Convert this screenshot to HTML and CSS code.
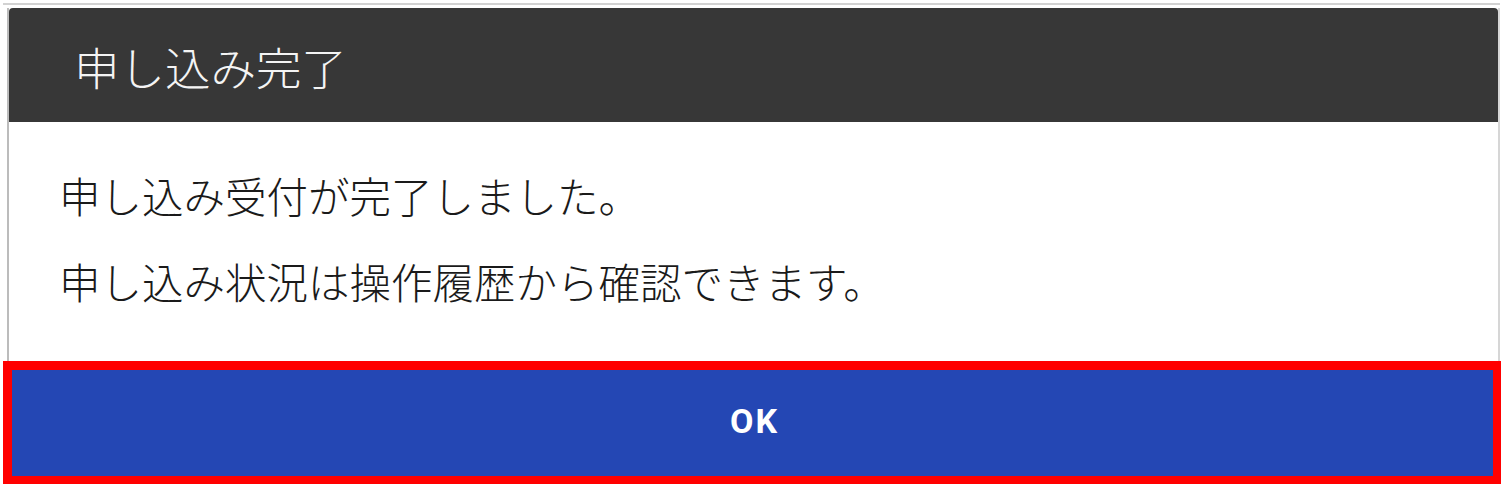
FILE: index.html
```html
<!DOCTYPE html>
<html lang="ja">

<head>
	<meta charset="UTF-8">
	<meta name="viewport" content="width=device-width, initial-scale=1.0">
	<title>申し込み完了</title>
	<link rel="stylesheet" href="styles.css">
</head>

<body>
	<div class="dialog">
		<div class="panel">
			<div class="header">
				<h1 class="title">申し込み完了</h1>
			</div>
			<div class="content">
				<p>申し込み受付が完了しました。</p>
				<p>申し込み状況は操作履歴から確認できます。</p>
			</div>
		</div>
	</div>
	<div class="action">
		<button class="ok" type="button">OK</button>
	</div>
</body>

</html>
```

FILE: styles.css
```css
* {
	padding: 0;
	margin: 0;
	border: 0;
	box-sizing: border-box;
}

body {
	background: #fff;
	font-family: "Noto Sans CJK JP", "Noto Sans", sans-serif;
	width: 1503px;
	height: 490px;
	overflow: hidden;
}

.dialog {
	margin: 3px 3px 0 3px;
	border-top: 2px solid #d2d2d2;
	padding-top: 3px;
}

.panel {
	margin-left: 4px;
	border-left: 2px solid #bcbcbc;
	border-right: 2px solid #d6d6d6;
}

.header {
	height: 114px;
	background: #373737;
	border-radius: 4px 4px 0 0;
	padding: 4px 0 0 65px;
	display: flex;
	align-items: center;
}

.title {
	font-size: 45.5px;
	font-weight: 300;
	color: #f4f4f4;
	line-height: 1;
}

.content {
	height: 239px;
	padding: 49px 0 0 50px;
	color: #1a1a1a;
	font-size: 41.5px;
	font-weight: 300;
}

.content p {
	line-height: 48px;
	margin-bottom: 38px;
}

.action {
	margin-left: 3px;
	width: 1498px;
	height: 123px;
	border: 9px solid #ff0000;
	border-right-width: 8px;
	border-bottom-width: 8px;
}

.ok {
	display: block;
	width: 100%;
	height: 100%;
	background: #2447b4;
	color: #fff;
	font-family: Roboto, "Noto Sans", sans-serif;
	font-weight: 700;
	font-size: 34px;
	letter-spacing: 2px;
	padding: 0 0 4px 4px;
	cursor: pointer;
}
```
